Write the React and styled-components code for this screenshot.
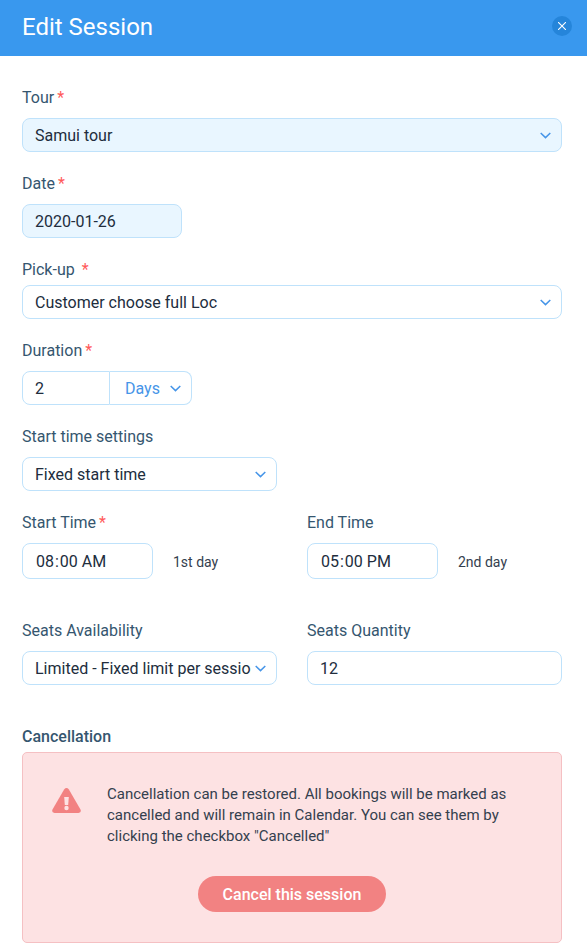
import React from "react";
import styled, { createGlobalStyle, css } from "styled-components";

const colors = {
  header: "#3998ee",
  headerDark: "#2585da",
  accent: "#4695e8",
  label: "#35566f",
  text: "#212d3d",
  note: "#34404e",
  border: "#bfe2fb",
  filled: "#e9f6ff",
  required: "#ff5a5a",
  danger: "#f28282",
  dangerBg: "#fde2e3",
  dangerBorder: "#f5c0c3",
};

const GlobalStyle = createGlobalStyle`
  *, *::before, *::after { box-sizing: border-box; }
  body {
    margin: 0;
    background: #ffffff;
    color: ${colors.text};
    font-family: Roboto, "Liberation Sans", sans-serif;
    font-size: 16px;
  }
  button, input, select { font: inherit; color: inherit; }
`;

const Header = styled.header`
  display: flex;
  align-items: center;
  justify-content: space-between;
  height: 56px;
  padding: 0 15px 4px 22px;
  background: ${colors.header};
`;

const Title = styled.h1`
  margin: 0;
  padding-top: 2px;
  color: #ffffff;
  font-size: 24px;
  line-height: 28px;
  font-weight: 400;
`;

const CloseButton = styled.button`
  display: grid;
  place-items: center;
  width: 20px;
  height: 20px;
  padding: 0;
  border: 0;
  border-radius: 50%;
  background: ${colors.headerDark};
  color: #ffffff;
  cursor: pointer;
`;

const Form = styled.form`
  display: flex;
  flex-direction: column;
  gap: 22px;
  padding: 32px 25px 3px 22px;
`;

const Columns = styled.div`
  display: grid;
  grid-template-columns: 1fr 1fr;
  gap: 30px;
  margin-bottom: ${(p) => (p.$spaced ? "20px" : "0")};
`;

const FieldBox = styled.div`
  display: flex;
  flex-direction: column;
  gap: ${(p) => (p.$tight ? "5px" : "10px")};
  min-width: 0;
`;

const Label = styled.label`
  color: ${colors.label};
  line-height: 20px;
`;

const Required = styled.span`
  margin-left: ${(p) => (p.$wide ? "7px" : "3px")};
  color: ${colors.required};
`;

const control = css`
  width: 100%;
  min-width: 0;
  height: 34px;
  margin: 0;
  padding: 0 12px;
  border: 1px solid ${colors.border};
  border-radius: 8px;
  background: ${(p) => (p.$filled ? colors.filled : "#ffffff")};
  color: ${colors.text};
  outline: 0;
`;

const Input = styled.input`
  ${control}
  max-width: ${(p) => p.$max || "none"};
`;

const TimeInput = styled.input`
  ${control}
  width: 131px;
  height: 36px;

  &::-webkit-calendar-picker-indicator {
    display: none;
  }
`;

const SelectBox = styled.div`
  display: grid;
  align-items: center;
  min-width: 0;

  & > * {
    grid-area: 1 / 1;
  }
`;

const Select = styled.select`
  ${control}
  appearance: none;
  padding-right: 25px;
`;

const UnitSelect = styled(Select)`
  padding-left: 15px;
  border-left: 0;
  border-radius: 0 8px 8px 0;
  color: ${colors.accent};
`;

const ChevronIcon = styled.svg`
  justify-self: end;
  margin-right: 11px;
  color: ${colors.accent};
  pointer-events: none;
`;

const DurationGroup = styled.div`
  display: grid;
  grid-template-columns: 88px 82px;
`;

const AmountInput = styled(Input)`
  border-radius: 8px 0 0 8px;
`;

const TimeRow = styled.div`
  display: flex;
  align-items: center;
  gap: 20px;
`;

const DayNote = styled.span`
  padding-top: 2px;
  color: ${colors.note};
  font-size: 14px;
  line-height: 20px;
`;

const Section = styled.section`
  display: flex;
  flex-direction: column;
  gap: 5px;
  margin-top: 20px;
`;

const SectionTitle = styled.h2`
  margin: 0;
  color: ${colors.label};
  font-size: 16px;
  line-height: 20px;
  font-weight: 500;
`;

const Warning = styled.div`
  display: flex;
  flex-direction: column;
  align-items: center;
  gap: 29px;
  padding: 31px 29px 30px;
  border: 1px solid ${colors.dangerBorder};
  border-radius: 5px;
  background: ${colors.dangerBg};
`;

const WarningMessage = styled.div`
  display: grid;
  grid-template-columns: 29px 1fr;
  gap: 26px;
  width: 100%;
`;

const WarningSvg = styled.svg`
  margin-top: 4px;
`;

const WarningText = styled.p`
  margin: 0;
  color: ${colors.note};
  font-size: 15px;
  line-height: 21px;
`;

const DangerButton = styled.button`
  height: 36px;
  padding: 0 25px;
  border: 0;
  border-radius: 18px;
  background: ${colors.danger};
  color: #ffffff;
  font-weight: 500;
  cursor: pointer;
`;

function Field({ id, label, required, wideMark, tight, children }) {
  return (
    <FieldBox $tight={tight}>
      <Label htmlFor={id}>
        {label}
        {required && <Required $wide={wideMark}>*</Required>}
      </Label>
      {children}
    </FieldBox>
  );
}

function Chevron() {
  return (
    <ChevronIcon width="11" height="7" viewBox="0 0 11 7" fill="none" aria-hidden="true">
      <path d="M0.7 1 L5.5 5.6 L10.3 1" stroke="currentColor" strokeWidth="1.5" />
    </ChevronIcon>
  );
}

function Dropdown({ as: Control = Select, options, ...rest }) {
  return (
    <SelectBox>
      <Control {...rest}>
        {options.map((option) => (
          <option key={option}>{option}</option>
        ))}
      </Control>
      <Chevron />
    </SelectBox>
  );
}

function WarningIcon() {
  return (
    <WarningSvg width="29" height="25" viewBox="0 0 29 25" aria-hidden="true">
      <path
        d="M12.1 1.4 Q14.5 -1.4 16.9 1.4 L28.5 21.6 Q29.7 24.6 26.5 25 H2.5 Q-0.7 24.6 0.5 21.6 Z"
        fill={colors.danger}
      />
      <path d="M12.2 9 H16.8 L16.2 17 H12.8 Z" fill={colors.dangerBg} />
      <circle cx="14.5" cy="20" r="2.2" fill={colors.dangerBg} />
    </WarningSvg>
  );
}

export default function App() {
  return (
    <>
      <GlobalStyle />
      <Header>
        <Title>Edit Session</Title>
        <CloseButton type="button" aria-label="Close">
          <svg width="8" height="8" viewBox="0 0 8 8" aria-hidden="true">
            <path d="M0 0 L8 8 M8 0 L0 8" stroke="currentColor" strokeWidth="1.1" />
          </svg>
        </CloseButton>
      </Header>
      <Form onSubmit={(event) => event.preventDefault()}>
        <Field id="tour" label="Tour" required>
          <Dropdown id="tour" $filled options={["Samui tour"]} />
        </Field>
        <Field id="date" label="Date" required>
          <Input id="date" $filled $max="160px" defaultValue="2020-01-26" />
        </Field>
        <Field id="pickup" label="Pick-up" required wideMark tight>
          <Dropdown id="pickup" options={["Customer choose full Loc"]} />
        </Field>
        <Field id="duration" label="Duration" required>
          <DurationGroup>
            <AmountInput id="duration" inputMode="numeric" defaultValue="2" />
            <Dropdown as={UnitSelect} aria-label="Duration unit" options={["Days"]} />
          </DurationGroup>
        </Field>
        <Columns>
          <Field id="start-mode" label="Start time settings">
            <Dropdown id="start-mode" options={["Fixed start time"]} />
          </Field>
        </Columns>
        <Columns $spaced>
          <Field id="start-time" label="Start Time" required>
            <TimeRow>
              <TimeInput id="start-time" type="time" defaultValue="08:00" />
              <DayNote>1st day</DayNote>
            </TimeRow>
          </Field>
          <Field id="end-time" label="End Time">
            <TimeRow>
              <TimeInput id="end-time" type="time" defaultValue="17:00" />
              <DayNote>2nd day</DayNote>
            </TimeRow>
          </Field>
        </Columns>
        <Columns>
          <Field id="availability" label="Seats Availability">
            <Dropdown id="availability" options={["Limited - Fixed limit per session"]} />
          </Field>
          <Field id="quantity" label="Seats Quantity">
            <Input id="quantity" inputMode="numeric" defaultValue="12" />
          </Field>
        </Columns>
        <Section>
          <SectionTitle>Cancellation</SectionTitle>
          <Warning>
            <WarningMessage>
              <WarningIcon />
              <WarningText>
                Cancellation can be restored. All bookings will be marked as cancelled and will
                remain in Calendar. You can see them by clicking the checkbox "Cancelled"
              </WarningText>
            </WarningMessage>
            <DangerButton type="button">Cancel this session</DangerButton>
          </Warning>
        </Section>
      </Form>
    </>
  );
}
